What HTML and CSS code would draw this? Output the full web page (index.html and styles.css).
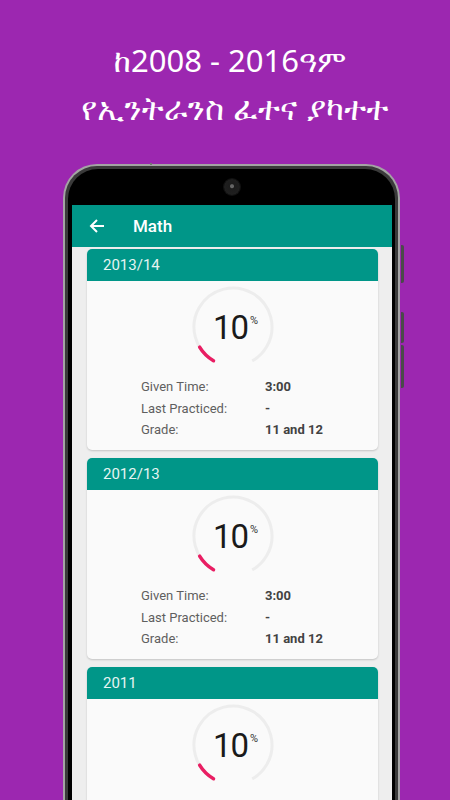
FILE: index.html
```html
<!DOCTYPE html>
<html lang="am">
<head>
<meta charset="utf-8">
<title>Math</title>
<link rel="stylesheet" href="styles.css">
</head>
<body>
<div class="page">
  <header class="headline">
    <div class="line one">ከ2008 - 2016ዓም</div>
    <div class="line two">የኢንትራንስ ፈተና ያካተተ</div>
  </header>

  <div class="phone">
    <span class="btn btn-power"></span>
    <span class="btn btn-vol1"></span>
    <span class="btn btn-vol2"></span>
    <span class="btn-top"></span>
    <div class="bezel">
      <div class="status"><span class="camera"></span></div>
      <div class="screen">
        <div class="appbar">
          <svg class="back" width="16" height="16" viewBox="0 0 16 16">
            <path d="M15 8H2M8 2L2 8l6 6" fill="none" stroke="#fff" stroke-width="2"/>
          </svg>
          <span class="title">Math</span>
        </div>
        <div class="list">
          <section class="card">
            <div class="card-head">2013/14</div>
            <div class="card-body">
              <div class="gauge">
                <svg width="82" height="82" viewBox="0 0 82 82">
                  <circle class="track" cx="41" cy="41" r="39" transform="rotate(120 41 41)"/>
                  <circle class="value" cx="41" cy="41" r="39" transform="rotate(120 41 41)"/>
                </svg>
                <div class="pct"><span class="num">10</span><span class="sign">%</span></div>
              </div>
              <div class="info">
                <span class="lab">Given Time:</span><span class="val">3:00</span>
                <span class="lab">Last Practiced:</span><span class="val">-</span>
                <span class="lab">Grade:</span><span class="val">11 and 12</span>
              </div>
            </div>
          </section>
          <section class="card">
            <div class="card-head">2012/13</div>
            <div class="card-body">
              <div class="gauge">
                <svg width="82" height="82" viewBox="0 0 82 82">
                  <circle class="track" cx="41" cy="41" r="39" transform="rotate(120 41 41)"/>
                  <circle class="value" cx="41" cy="41" r="39" transform="rotate(120 41 41)"/>
                </svg>
                <div class="pct"><span class="num">10</span><span class="sign">%</span></div>
              </div>
              <div class="info">
                <span class="lab">Given Time:</span><span class="val">3:00</span>
                <span class="lab">Last Practiced:</span><span class="val">-</span>
                <span class="lab">Grade:</span><span class="val">11 and 12</span>
              </div>
            </div>
          </section>
          <section class="card">
            <div class="card-head">2011</div>
            <div class="card-body">
              <div class="gauge">
                <svg width="82" height="82" viewBox="0 0 82 82">
                  <circle class="track" cx="41" cy="41" r="39" transform="rotate(120 41 41)"/>
                  <circle class="value" cx="41" cy="41" r="39" transform="rotate(120 41 41)"/>
                </svg>
                <div class="pct"><span class="num">10</span><span class="sign">%</span></div>
              </div>
              <div class="info">
                <span class="lab">Given Time:</span><span class="val">3:00</span>
                <span class="lab">Last Practiced:</span><span class="val">-</span>
                <span class="lab">Grade:</span><span class="val">11 and 12</span>
              </div>
            </div>
          </section>
        </div>
      </div>
    </div>
  </div>
</div>
</body>
</html>
```

FILE: styles.css
```css
html, body {
  margin: 0;
  padding: 0;
}
body {
  background: #9c27b0;
  font-family: Roboto, "Noto Sans", "DejaVu Sans", sans-serif;
}
.page {
  width: 450px;
  height: 800px;
  overflow: hidden;
  background: #9c27b0;
}
.headline {
  padding-top: 36px;
  padding-left: 10px;
  text-align: center;
  color: #fff;
  font-family: "Noto Sans", "DejaVu Sans", "FreeSerif", sans-serif;
  line-height: 48px;
  height: 96px;
}
.one {
  font-size: 31px;
}
.two {
  font-size: 32.5px;
  letter-spacing: 0.3px;
  padding-left: 10px;
}
.phone {
  position: relative;
  box-sizing: border-box;
  width: 337px;
  height: 700px;
  margin: 32px 0 0 63px;
  background: #3a3a3a;
  border: 2px solid #a4a4a4;
  border-bottom: 0;
  border-radius: 34px 34px 0 0;
  padding: 3px 3px 0 3px;
}
.btn {
  position: absolute;
  right: -6px;
  width: 3px;
  background: #4a4a4a;
  border-radius: 0 2px 2px 0;
}
.btn-power { top: 79px; height: 38px; }
.btn-vol1 { top: 146px; height: 31px; }
.btn-vol2 { top: 179px; height: 43px; }
.btn-top {
  position: absolute;
  top: -3px;
  left: 85px;
  width: 2px;
  height: 2px;
  background: #777;
}
.bezel {
  height: 100%;
  background: #000;
  border-radius: 30px 30px 0 0;
  padding: 0 3px 0 4px;
}
.status {
  height: 36px;
  display: flex;
  align-items: center;
  justify-content: center;
}
.camera {
  width: 16px;
  height: 16px;
  border-radius: 50%;
  background: radial-gradient(circle at 50% 45%, #666 0 1.5px, #1c1c1c 2.5px, #222 100%);
  box-shadow: 0 0 0 1px #111;
}
.screen {
  background: #eeeeee;
  height: 100%;
}
.appbar {
  height: 42px;
  background: #009688;
  display: flex;
  align-items: center;
  padding-left: 17px;
  box-sizing: border-box;
}
.back {
  display: block;
}
.title {
  margin-left: 28px;
  color: #fff;
  font-size: 17px;
  font-weight: 500;
}
.list {
  padding: 2px 14px 0 15px;
  display: flex;
  flex-direction: column;
  gap: 8px;
}
.card {
  height: 201px;
  background: #fafafa;
  border-radius: 5px;
  overflow: hidden;
  box-shadow: 0 1px 2px rgba(0,0,0,0.18);
}
.card-head {
  height: 32px;
  background: #009688;
  color: #e6f4f2;
  font-size: 15px;
  line-height: 32px;
  padding-left: 16px;
}
.card-body {
  padding-top: 5px;
}
.gauge {
  position: relative;
  width: 82px;
  height: 82px;
  margin: 0 auto;
}
.gauge svg {
  display: block;
}
.track {
  fill: none;
  stroke: #ededed;
  stroke-width: 3;
  stroke-dasharray: 204.2 300;
}
.value {
  fill: none;
  stroke: #e91e63;
  stroke-width: 3.5;
  stroke-linecap: round;
  stroke-dasharray: 19.6 300;
}
.pct {
  position: absolute;
  inset: 0;
  display: flex;
  align-items: flex-start;
  justify-content: center;
  padding-top: 25px;
  padding-left: 6px;
  box-sizing: border-box;
}
.num {
  font-size: 33px;
  line-height: 33px;
  color: #1a1a1a;
  letter-spacing: -1px;
}
.sign {
  font-size: 11px;
  line-height: 12px;
  color: #333;
  margin-left: 2px;
  margin-top: 4px;
}
.info {
  display: grid;
  grid-template-columns: 124px auto;
  padding-left: 54px;
  margin-top: 8px;
  font-size: 13px;
  line-height: 21.5px;
}
.lab {
  color: #5f5f5f;
}
.val {
  color: #424242;
  font-weight: 700;
}
```
